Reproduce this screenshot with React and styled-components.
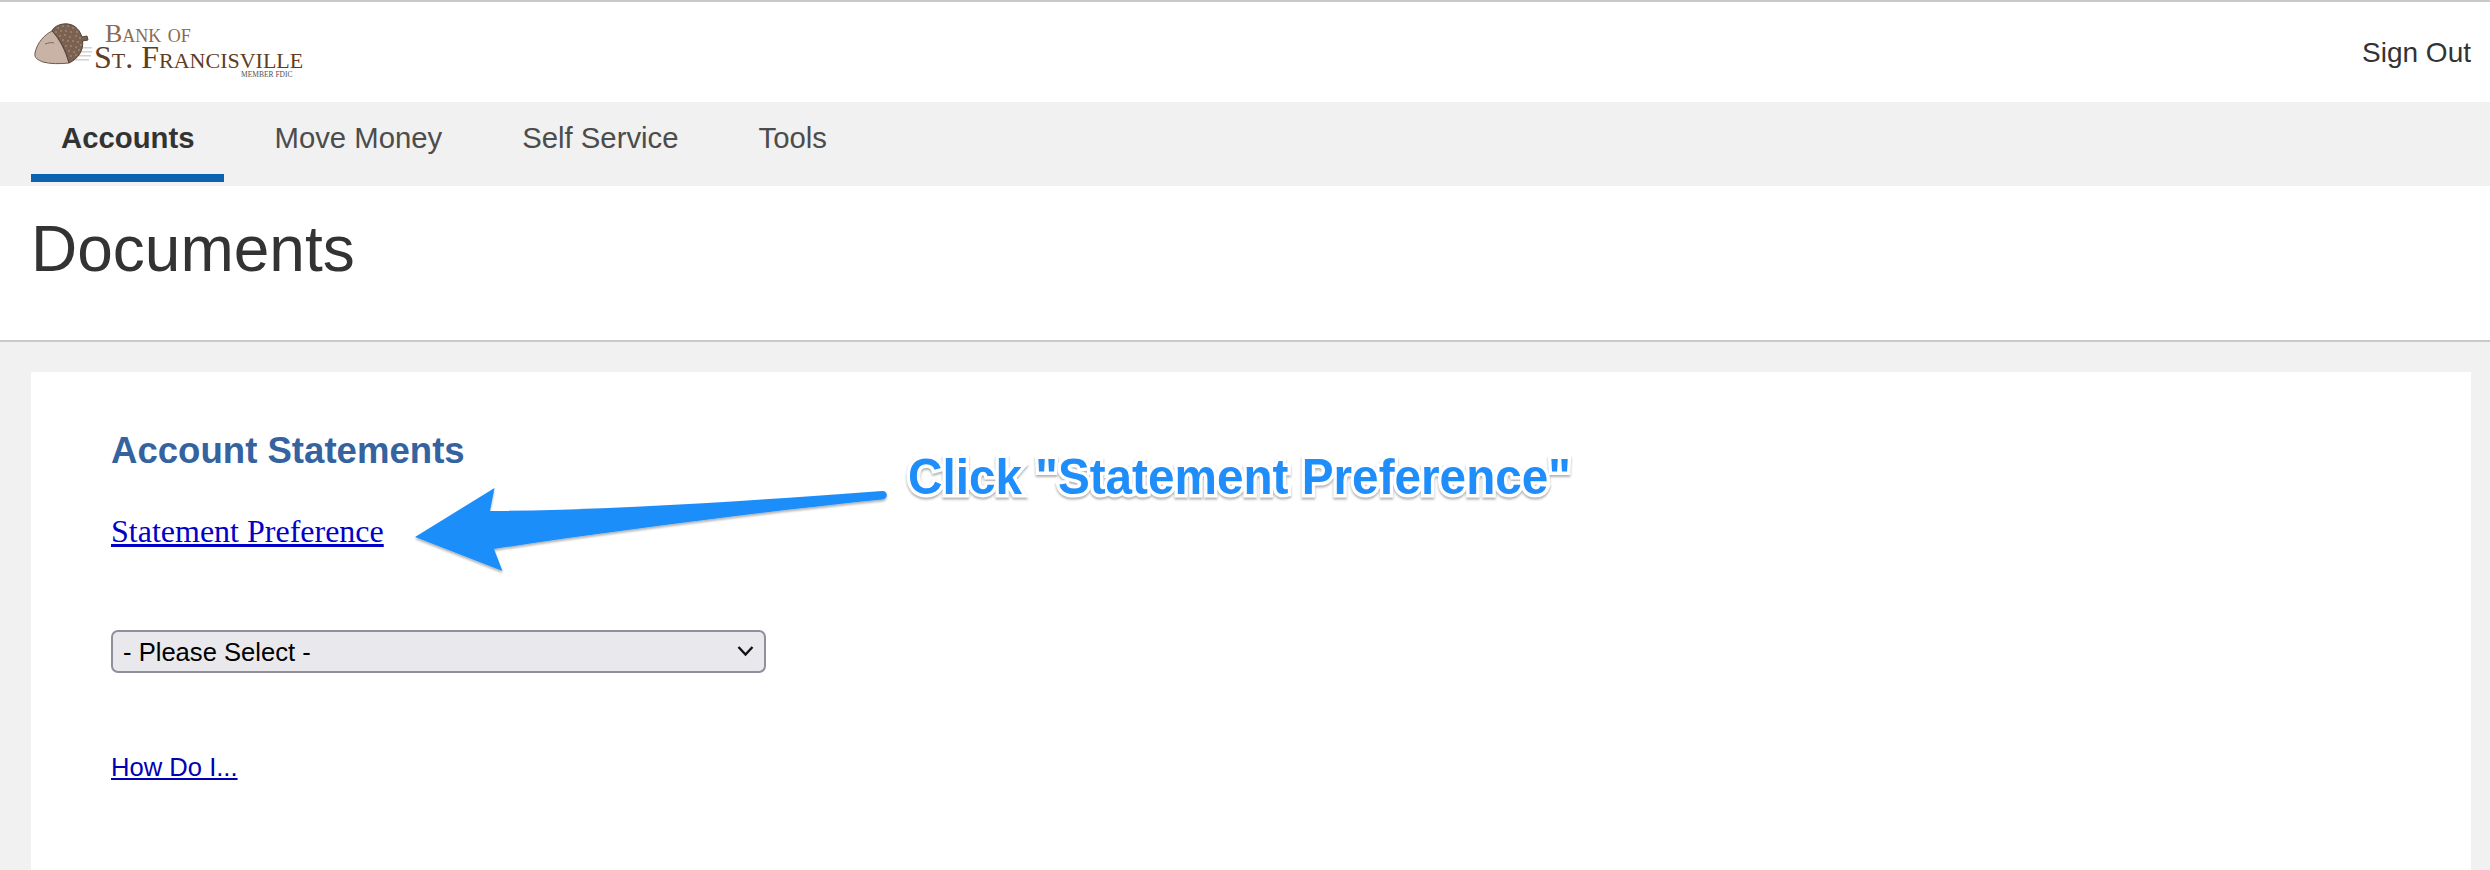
import React from "react";
import styled, { createGlobalStyle } from "styled-components";

const GlobalStyle = createGlobalStyle`
  html, body {
    margin: 0;
    padding: 0;
    height: 870px;
    overflow: hidden;
    background: #f1f1f1;
    font-family: "Liberation Sans", Arial, sans-serif;
  }
`;

const Page = styled.div`
  position: relative;
  height: 870px;
  display: flex;
  flex-direction: column;
  overflow: hidden;
`;

const TopBar = styled.header`
  flex: 0 0 100px;
  border-top: 2px solid #c9c9c9;
  background: #fff;
  display: flex;
  align-items: flex-start;
  justify-content: space-between;
  padding: 0 19px 0 34px;
`;

const Logo = styled.div`
  display: flex;
  align-items: flex-start;
  padding-top: 21px;
`;

const LogoText = styled.div`
  display: flex;
  flex-direction: column;
  font-family: "Liberation Serif", "Times New Roman", serif;
`;

const LogoTop = styled.span`
  color: #8b6b50;
  font-size: 26px;
  line-height: 22px;
  margin-left: 11px;
  font-variant: small-caps;
  white-space: nowrap;
`;

const LogoMain = styled.span`
  color: #5f3d25;
  font-size: 32px;
  line-height: 25px;
  font-variant: small-caps;
  white-space: nowrap;
`;

const LogoSub = styled.span`
  color: #55504c;
  font-size: 7.5px;
  line-height: 9px;
  margin-left: 147px;
  white-space: nowrap;
`;

const SignOut = styled.a`
  color: #333;
  font-size: 28px;
  line-height: 32px;
  margin-top: 35px;
`;

const Nav = styled.nav`
  flex: 0 0 84px;
  background: #f1f1f1;
  display: flex;
  padding-left: 31px;
`;

const NavItem = styled.a`
  box-sizing: border-box;
  height: 80px;
  padding: 18px 30px 0;
  margin-right: 20px;
  font-size: 29.3px;
  line-height: 36px;
  font-weight: ${(p) => (p.$active ? 700 : 400)};
  color: ${(p) => (p.$active ? "#333" : "#4c4c4c")};
  border-bottom: 8px solid ${(p) => (p.$active ? "#0a62b0" : "transparent")};
`;

const TitleBar = styled.div`
  flex: 0 0 156px;
  box-sizing: border-box;
  background: #fff;
  border-bottom: 2px solid #cbcbcb;
  padding: 26px 0 0 31px;
`;

const Title = styled.h1`
  margin: 0;
  font-size: 64px;
  line-height: 74px;
  font-weight: 400;
  color: #333;
`;

const Main = styled.main`
  flex: 1;
  padding: 30px 19px 0 31px;
`;

const Card = styled.section`
  background: #fff;
  height: 100%;
  padding: 57px 80px 0;
`;

const SectionTitle = styled.h2`
  margin: 0;
  font-size: 36.6px;
  line-height: 44px;
  font-weight: 700;
  color: #34639f;
`;

const PrefLink = styled.a`
  display: inline-block;
  margin-top: 40px;
  font-family: "Liberation Serif", "Times New Roman", serif;
  font-size: 32px;
  line-height: 36px;
  color: #0000c8;
  text-decoration: underline;
`;

const SelectWrap = styled.div`
  position: relative;
  width: 655px;
  height: 43px;
  margin-top: 81px;
`;

const Select = styled.select`
  appearance: none;
  width: 100%;
  height: 100%;
  box-sizing: border-box;
  padding: 0 10px;
  background: #e9e9ed;
  border: 2px solid #8f8f9d;
  border-radius: 7px;
  font-family: "Liberation Sans", Arial, sans-serif;
  font-size: 25.6px;
  color: #000;
`;

const Chevron = styled.svg`
  position: absolute;
  right: 12px;
  top: 15px;
  width: 17px;
  height: 12px;
`;

const HelpLink = styled.a`
  display: block;
  width: max-content;
  margin-top: 79px;
  font-size: 25.6px;
  line-height: 30px;
  color: #0000b4;
  text-decoration: underline;
`;

const ArrowSvg = styled.svg`
  position: absolute;
  left: 0;
  top: 0;
  width: 2490px;
  height: 870px;
  pointer-events: none;
`;

const Callout = styled.div`
  position: absolute;
  left: 908px;
  top: 448px;
  font-size: 50px;
  line-height: 58px;
  font-weight: 700;
  color: #1f8efa;
  white-space: nowrap;
  transform: scaleX(0.954);
  transform-origin: left center;
  -webkit-text-stroke: 7px #fff;
  paint-order: stroke fill;
  filter: drop-shadow(0 2px 1px rgba(0, 0, 0, 0.3));
`;

// speckles on the acorn cap
const capDots = [
  [24, 5], [29, 3], [34, 3], [39, 5], [43, 9], [22, 9], [27, 8], [32, 8], [37, 9], [42, 13],
  [26, 13], [31, 12], [36, 14], [46, 15], [29, 17], [34, 18], [39, 18], [44, 19], [32, 23],
  [37, 23], [42, 24], [47, 22], [35, 28], [40, 29], [45, 27], [37, 33], [42, 32],
];

function AcornLogo() {
  return (
    <svg width="60" height="46" viewBox="0 0 60 46">
      <path d="M48 24h10v1.6H48zM47 28h11v1.6H47zM45 32h12v1.6H45zM41 36h14v1.6H41z" fill="#d2d2d2" />
      <path
        d="M1 30C3 20 10 12 18 8C24 14 32 28 35 40C26 41 16 41 9 39C4 37 0 35 1 30Z"
        fill="#c9b3a6"
        stroke="#6e5a4c"
        strokeWidth="1"
      />
      <path d="M11 21c3-1 6-2 9-1" stroke="#7d6a5c" strokeWidth="1" fill="none" />
      <path
        d="M18 8C20 3 28 0 34 1C42 2 46 8 48 14L53 13L54 17L48.5 18C50 27 44 36 35 40C32 28 26 15 18 8Z"
        fill="#7a6150"
        stroke="#54413a"
        strokeWidth="1"
      />
      {capDots.map(([x, y]) => (
        <circle key={x + "-" + y} cx={x} cy={y} r="0.8" fill="#b7a392" />
      ))}
    </svg>
  );
}

export default function App() {
  return (
    <>
      <GlobalStyle />
      <Page>
        <TopBar>
          <Logo>
            <AcornLogo />
            <LogoText>
              <LogoTop>Bank of</LogoTop>
              <LogoMain>St. Francisville</LogoMain>
              <LogoSub>MEMBER FDIC</LogoSub>
            </LogoText>
          </Logo>
          <SignOut>Sign Out</SignOut>
        </TopBar>
        <Nav>
          <NavItem $active>Accounts</NavItem>
          <NavItem>Move Money</NavItem>
          <NavItem>Self Service</NavItem>
          <NavItem>Tools</NavItem>
        </Nav>
        <TitleBar>
          <Title>Documents</Title>
        </TitleBar>
        <Main>
          <Card>
            <SectionTitle>Account Statements</SectionTitle>
            <PrefLink>Statement Preference</PrefLink>
            <SelectWrap>
              <Select defaultValue="">
                <option value="">- Please Select -</option>
              </Select>
              <Chevron viewBox="0 0 17 12">
                <path d="M1.5 2l7 7.5 7-7.5" fill="none" stroke="#111" strokeWidth="2.4" />
              </Chevron>
            </SelectWrap>
            <HelpLink>How Do I...</HelpLink>
          </Card>
        </Main>
        <ArrowSvg viewBox="0 0 2490 870">
          <defs>
            <filter id="arrowShadow" x="-5%" y="-20%" width="110%" height="140%">
              <feDropShadow dx="0" dy="2" stdDeviation="1.2" floodColor="#000" floodOpacity="0.3" />
            </filter>
          </defs>
          <path
            d="M415 537L494.5 488L490 511C620 510 760 500 882 491C888 490.5 889 498.5 882 499.5C760 512 620 530 494 549L502.5 571Z"
            fill="#1f8efa"
            filter="url(#arrowShadow)"
          />
        </ArrowSvg>
        <Callout>Click "Statement Preference"</Callout>
      </Page>
    </>
  );
}
